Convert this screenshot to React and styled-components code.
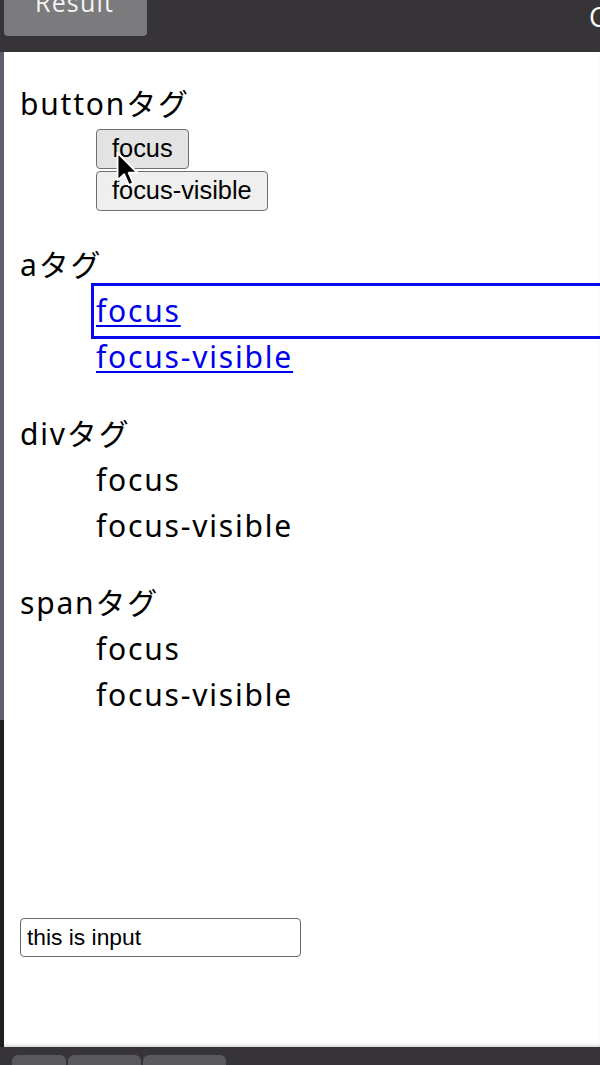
import styled, { createGlobalStyle } from "styled-components";

const GlobalStyle = createGlobalStyle`
  html, body {
    margin: 0;
    padding: 0;
    background: #363436;
  }
  body {
    width: 600px;
    height: 1065px;
    overflow: hidden;
  }
`;

const Frame = styled.div`
  width: 600px;
  height: 1065px;
  display: flex;
  flex-direction: column;
  background: #363436;
  overflow: hidden;
`;

const TopBar = styled.header`
  height: 52px;
  flex: none;
  display: flex;
  justify-content: space-between;
  align-items: flex-start;
  padding-left: 4px;
  background: #363436;
  overflow: hidden;
`;

const Tab = styled.div`
  width: 143px;
  height: 36px;
  background: #7b7a7c;
  border-radius: 0 0 4px 4px;
  overflow: hidden;
  padding-left: 31px;
  box-sizing: border-box;
`;

const TabLabel = styled.span`
  display: block;
  margin-top: -11px;
  font-family: "Open Sans", "Liberation Sans", sans-serif;
  font-size: 25px;
  line-height: 26px;
  letter-spacing: 1.2px;
  color: #f4f4f4;
`;

const Corner = styled.span`
  font-family: "Open Sans", "Liberation Sans", sans-serif;
  font-size: 27px;
  line-height: 34px;
  color: #ffffff;
  margin-right: -6px;
`;

const Body = styled.div`
  flex: 1;
  display: flex;
  min-height: 0;
  box-shadow: inset 0 3px 3px -1px rgba(0, 0, 0, 0.18);
`;

const Strip = styled.div`
  width: 4px;
  flex: none;
  background: linear-gradient(#5c5f6e 0, #5c5f6e 668px, #1f1f21 668px);
`;

const Page = styled.main`
  position: relative;
  flex: 1;
  background: #ffffff;
  padding: 29px 0 0 16px;
  box-shadow: inset 0 -3px 3px -1px rgba(0, 0, 0, 0.15);
  font-family: "Noto Sans", "Noto Sans CJK JP", sans-serif;
  font-size: 30px;
  letter-spacing: 1.8px;
  color: #000;
`;

const Section = styled.section`
  margin-bottom: 31px;
`;

const Heading = styled.div`
  line-height: 46px;
  height: 46px;
`;

const Items = styled.div`
  padding-left: 76px;
  display: flex;
  flex-direction: column;
  align-items: ${(p) => (p.$stretch ? "stretch" : "flex-start")};
`;

const Button = styled.button`
  font-family: "Liberation Sans", Arial, sans-serif;
  font-size: 25.4px;
  letter-spacing: 0;
  line-height: 29px;
  padding: 4px 15px 5px;
  margin: 2px 0 0;
  border: 1.5px solid #6f6f6f;
  border-radius: 4px;
  background: ${(p) => (p.$hover ? "#e3e3e3" : "#efefef")};
  color: #000;
`;

const Link = styled.a`
  display: block;
  line-height: 46px;
  height: 46px;
  color: #0000ee;
  text-decoration: underline;
  text-underline-offset: 3px;
  text-decoration-thickness: 2px;
  outline: ${(p) => (p.$focused ? "3.5px solid #0a0aee" : "none")};
  outline-offset: 2px;
  margin-right: -40px;
`;

const Text = styled.div`
  line-height: 46px;
  height: 46px;
`;

const Input = styled.input`
  display: block;
  margin-top: 200px;
  width: 281px;
  height: 39px;
  box-sizing: border-box;
  padding: 0 6px;
  font-family: "Liberation Sans", Arial, sans-serif;
  font-size: 22.8px;
  letter-spacing: 0;
  color: #000;
  border: 1.5px solid #6a6a6a;
  border-radius: 4px;
  background: #fff;
`;

const Cursor = styled.svg`
  position: absolute;
  left: 111px;
  top: 99px;
  width: 24px;
  height: 36px;
  pointer-events: none;
`;

const BottomBar = styled.footer`
  height: 18px;
  flex: none;
  display: flex;
  align-items: flex-end;
  gap: 2px;
  padding-left: 12px;
  background: #363436;
`;

const BottomTab = styled.div`
  width: ${(p) => p.$w}px;
  height: 10px;
  background: #5a595b;
  border-radius: 6px 6px 0 0;
`;

const sections = [
  { title: "divタグ" },
  { title: "spanタグ" },
];

export default function App() {
  return (
    <Frame>
      <GlobalStyle />
      <TopBar>
        <Tab>
          <TabLabel>Result</TabLabel>
        </Tab>
        <Corner>C</Corner>
      </TopBar>
      <Body>
        <Strip />
        <Page>
          <Section>
            <Heading>buttonタグ</Heading>
            <Items>
              <Button $hover>focus</Button>
              <Button>focus-visible</Button>
            </Items>
          </Section>
          <Section>
            <Heading>aタグ</Heading>
            <Items $stretch>
              <Link href="#" $focused onClick={(e) => e.preventDefault()}>
                focus
              </Link>
              <Link href="#" onClick={(e) => e.preventDefault()}>
                focus-visible
              </Link>
            </Items>
          </Section>
          {sections.map((s) => (
            <Section key={s.title}>
              <Heading>{s.title}</Heading>
              <Items>
                <Text>focus</Text>
                <Text>focus-visible</Text>
              </Items>
            </Section>
          ))}
          <Input defaultValue="this is input" readOnly />
          <Cursor viewBox="0 0 12 19">
            <path
              d="M1 1 L1 15.5 L4.5 12.3 L7 18 L9.3 17 L6.9 11.5 L11.5 11.5 Z"
              fill="#000"
              stroke="#fff"
              strokeWidth="1"
              strokeLinejoin="round"
            />
          </Cursor>
        </Page>
      </Body>
      <BottomBar>
        <BottomTab $w={54} />
        <BottomTab $w={73} />
        <BottomTab $w={83} />
      </BottomBar>
    </Frame>
  );
}
